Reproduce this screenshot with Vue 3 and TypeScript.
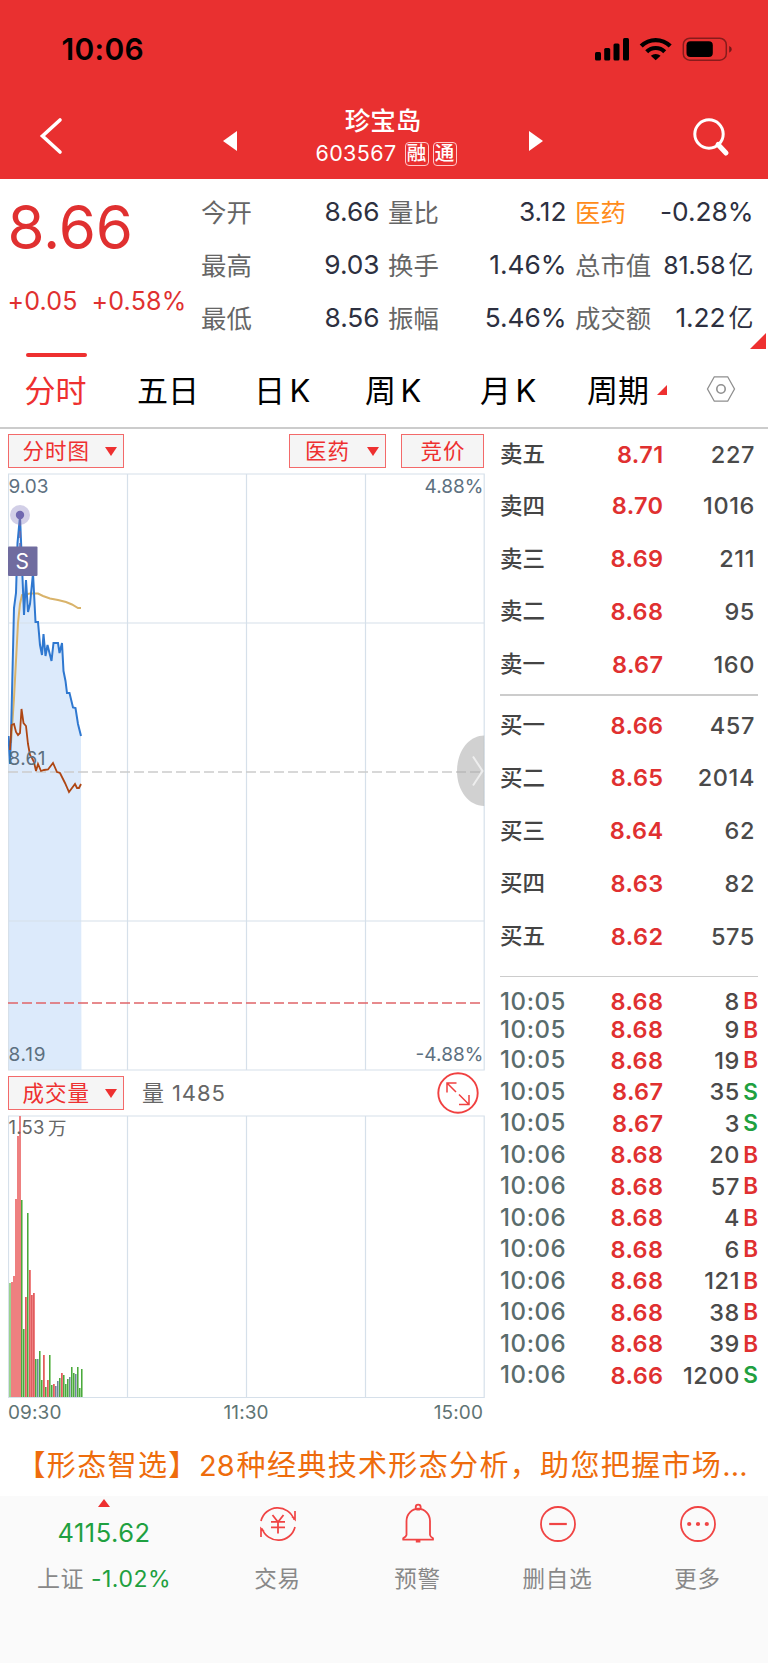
<script setup lang="ts">
interface Stat { label: string; value: string; unit?: string; tone?: string; small?: boolean }
interface Level { name: string; price: string; qty: number }
interface Tick { time: string; price: string; qty: number; side: 'B' | 'S' }
interface Bar { kind: 'r' | 'g' | 'b'; height: number }

const statColumns: Stat[][] = [
  [
    { label: '今开', value: '8.66' },
    { label: '最高', value: '9.03' },
    { label: '最低', value: '8.56' },
  ],
  [
    { label: '量比', value: '3.12' },
    { label: '换手', value: '1.46%' },
    { label: '振幅', value: '5.46%' },
  ],
  [
    { label: '医药', value: '-0.28%', tone: 'sector' },
    { label: '总市值', value: '81.58', unit: '亿', small: true },
    { label: '成交额', value: '1.22', unit: '亿' },
  ],
]

const asks: Level[] = [
  { name: '卖五', price: '8.71', qty: 227 },
  { name: '卖四', price: '8.70', qty: 1016 },
  { name: '卖三', price: '8.69', qty: 211 },
  { name: '卖二', price: '8.68', qty: 95 },
  { name: '卖一', price: '8.67', qty: 160 },
]
const bids: Level[] = [
  { name: '买一', price: '8.66', qty: 457 },
  { name: '买二', price: '8.65', qty: 2014 },
  { name: '买三', price: '8.64', qty: 62 },
  { name: '买四', price: '8.63', qty: 82 },
  { name: '买五', price: '8.62', qty: 575 },
]
const ticks: Tick[] = [
  { time: '10:05', price: '8.68', qty: 8, side: 'B' },
  { time: '10:05', price: '8.68', qty: 9, side: 'B' },
  { time: '10:05', price: '8.68', qty: 19, side: 'B' },
  { time: '10:05', price: '8.67', qty: 35, side: 'S' },
  { time: '10:05', price: '8.67', qty: 3, side: 'S' },
  { time: '10:06', price: '8.68', qty: 20, side: 'B' },
  { time: '10:06', price: '8.68', qty: 57, side: 'B' },
  { time: '10:06', price: '8.68', qty: 4, side: 'B' },
  { time: '10:06', price: '8.68', qty: 6, side: 'B' },
  { time: '10:06', price: '8.68', qty: 121, side: 'B' },
  { time: '10:06', price: '8.68', qty: 38, side: 'B' },
  { time: '10:06', price: '8.68', qty: 39, side: 'B' },
  { time: '10:06', price: '8.66', qty: 1200, side: 'S' },
]

const priceLine =
  '0.5,263 2,291 3,262 6,135 8,120 9.5,70 12,43 13.5,80 16,142 18,107 20,139 22,131 25,100 27.5,149 30,149 32,172 34,182 35.5,161 37.5,183 39.5,172 43.5,188 45.5,170 50,170 51.5,180 54,170 55.5,198 57.5,208 59,220 61.5,220 65,234.5 67.5,235 70,251 73,263'
const averageLine =
  '3,270 6,225 10,150 12,131 14,122 22,120.5 30,120.5 35,123 42,125.5 50,127 58,129 64,131.5 70,135 73,135'
const indexLine =
  '2,277 3.5,252 6,251 8,259 10,262 12,260 13.5,236 15.5,250 18,253 20,271 22,282 24,285 26,289 28,298 30,291 33,298 36,297 40,296.5 45,290 49,299 52,300 57,310 61,319 64,315 67,311 69,315 71,315 73,311'

const bars: Bar[] = (
  'g114 r115 r121 r198 r261 r281 g197 g68 r100 g184 r127 r102 r104 g38 b38 g46 g17 r42 g10 r17 g42 g12 r13 b11 b16 g19 r24 g22 g13 g18 b20 g30 g24 b23 g30 g9 g28'
).split(' ').map((s) => ({ kind: s[0] as Bar['kind'], height: Number(s.slice(1)) }))
</script>

<template>
  <div class="page">
    <header class="top">
      <div class="status">
        <span class="clock">10:06</span>
        <svg class="status-icons" width="140" height="26" viewBox="0 0 140 26">
          <rect x="0" y="16" width="6" height="8.5" rx="1.5" />
          <rect x="9.2" y="12" width="6" height="12.5" rx="1.5" />
          <rect x="18.5" y="7.5" width="6" height="17" rx="1.5" />
          <rect x="28" y="2" width="6" height="22.5" rx="1.5" />
          <path d="M44.7 8.6l3 3a18.4 18.4 0 0 1 26 0l3-3a22.7 22.7 0 0 0-32 0z" />
          <path d="M50.2 14.2l3 3a10.6 10.6 0 0 1 15 0l3-3a15 15 0 0 0-21 0z" />
          <path d="M55.8 19.8l4.9 4.5 4.9-4.5a7.4 7.4 0 0 0-9.8 0z" />
          <rect x="88.3" y="2.2" width="43" height="22" rx="6.5" fill="none" stroke="#000" stroke-opacity=".42" stroke-width="1.5" />
          <rect x="91.5" y="5.3" width="26.3" height="15.8" rx="4" />
          <path d="M134.2 10v6.7q2.6-.9 2.6-3.4t-2.6-3.3z" opacity=".5" />
        </svg>
      </div>
      <nav class="navbar">
        <svg class="back" width="24" height="38" viewBox="0 0 24 38"><path d="M21 3L3.5 19 21 35" fill="none" stroke="#fff" stroke-width="3.6" stroke-linecap="round" /></svg>
        <svg class="prev" width="14" height="20" viewBox="0 0 14 20"><path d="M0 10L14 0v20z" fill="#fff" /></svg>
        <div class="title">
          <h1>珍宝岛</h1>
          <div class="code"><span class="num">603567</span><i>融</i><i>通</i></div>
        </div>
        <svg class="next" width="14" height="20" viewBox="0 0 14 20"><path d="M14 10L0 0v20z" fill="#fff" /></svg>
        <svg class="search" width="38" height="40" viewBox="0 0 38 40" fill="none" stroke="#fff"><circle cx="17" cy="16" r="14.2" stroke-width="3" /><path d="M26 26.5l8 8.5" stroke-width="5" stroke-linecap="round" /></svg>
      </nav>
    </header>

    <section class="quote">
      <div class="headline">
        <div class="last">8.66</div>
        <div class="delta"><span>+0.05</span><span>+0.58%</span></div>
      </div>
      <div class="stats">
        <div v-for="(col, i) in statColumns" :key="i" class="stat-col">
          <div v-for="s in col" :key="s.label" class="stat" :class="[s.tone, { small: s.small }]">
            <span class="k">{{ s.label }}</span>
            <span class="v">{{ s.value }}<em v-if="s.unit">{{ s.unit }}</em></span>
          </div>
        </div>
      </div>
      <svg class="corner" width="16" height="16"><path d="M16 0v16H0z" fill="#ee3030" /></svg>
    </section>

    <nav class="tabs">
      <span class="tab t1 active">分时</span>
      <span class="tab t2">五日</span>
      <span class="tab t3">日<b>K</b></span>
      <span class="tab t4">周<b>K</b></span>
      <span class="tab t5">月<b>K</b></span>
      <span class="tab t6">周期</span>
      <svg class="more" width="10" height="10"><path d="M10 0v10H0z" fill="#ee3030" /></svg>
      <svg class="gear" width="30" height="28" viewBox="0 0 30 28" fill="none" stroke="#8f8f8f" stroke-width="1.3"><path d="M8.3 1.8h13.4L28.5 14l-6.8 12.2H8.3L1.5 14z" /><circle cx="15" cy="14" r="4.2" stroke-width="1.6" /></svg>
    </nav>

    <main class="body">
      <div class="charts">
        <div class="tools">
          <div class="select wide">分时图<svg width="12" height="9"><path d="M0 0h12L6 9z" fill="#ee3030" /></svg></div>
          <div class="select sector-btn">医药<svg width="12" height="9"><path d="M0 0h12L6 9z" fill="#ee3030" /></svg></div>
          <div class="select auction">竞价</div>
        </div>

        <svg class="chart" width="477" height="598" viewBox="0 0 477 598">
          <polygon :points="`0.5,597 ${priceLine} 73.5,597`" fill="#dceafb" />
          <g stroke="#d6e0ea" fill="none" stroke-width="1.2">
            <path d="M.5 1H476.2V597H.5z" />
            <path d="M119.5 1V597M238.5 1V597M357.5 1V597M0 150H476M0 448H476" />
          </g>
          <path d="M0 299H476" stroke="#ccc" stroke-width="1.6" stroke-dasharray="10 4" />
          <path d="M0 530H476" stroke="#e06468" stroke-width="1.6" stroke-dasharray="10 4" />
          <polyline :points="averageLine" fill="none" stroke="#d9b36a" stroke-width="2" />
          <polyline :points="priceLine" fill="none" stroke="#2f78d0" stroke-width="2" />
          <polyline :points="indexLine" fill="none" stroke="#ae4613" stroke-width="1.8" />
          <circle cx="12" cy="42" r="10" fill="#8880c0" opacity=".38" />
          <circle cx="12" cy="42" r="4.2" fill="#7068b0" />
          <path d="M12 46V74" stroke="#7068a8" stroke-width="1.5" stroke-dasharray="7 5" />
          <rect x="0" y="73.5" width="29.5" height="29.5" rx="1" fill="#706c9f" />
          <text x="14.3" y="95.5" text-anchor="middle" class="sell-mark">S</text>
          <g class="axis">
            <text x=".5" y="19.5" textLength="40">9.03</text>
            <text x=".5" y="291.5" textLength="37">8.61</text>
            <text x=".5" y="587.5" textLength="37">8.19</text>
            <text x="475.5" y="19.5" text-anchor="end" textLength="59">4.88%</text>
            <text x="475.5" y="587.5" text-anchor="end" textLength="68">-4.88%</text>
          </g>
          <path d="M476.2 262.5C461 262.5 449 278 449 298s12 35 27.2 35z" fill="#aaa" opacity=".54" />
          <path d="M465 283.5L474.5 298l-9.5 14.5" fill="none" stroke="#eee" stroke-width="2" />
        </svg>

        <div class="tools lower">
          <div class="select wide">成交量<svg width="12" height="9"><path d="M0 0h12L6 9z" fill="#ee3030" /></svg></div>
          <span class="vol">量 <span>1485</span></span>
          <svg class="expand" width="42" height="42" viewBox="0 0 42 42" fill="none" stroke="#f04040"><circle cx="21" cy="21" r="19.7" stroke-width="1.9" /><path d="M19 20L10 11M19.5 11H10v9.5M22 22.5l9.5 9.5M22 32.5h10v-9.5" stroke-width="1.5" /></svg>
        </div>

        <svg class="volume" width="477" height="284" viewBox="0 0 477 284">
          <path d="M.5 1H476.2V282.5H.5zM119.5 1V282M238.5 1V282M357.5 1V282" stroke="#d6e0ea" stroke-width="1.2" fill="none" />
          <g v-for="(b, i) in bars" :key="i" :class="'bar-' + b.kind">
            <rect class="soft" :x="1 + i * 2" :y="282 - b.height" width="2" :height="b.height" />
            <rect v-if="i > 5" :x="1 + i * 2" :y="282 - b.height" width="1" :height="b.height" />
          </g>
          <text x=".5" y="19" class="vol-max" textLength="36">1.53</text>
          <text x="40" y="19.5" class="vol-max">万</text>
        </svg>
        <div class="times"><span>09:30</span><span>11:30</span><span>15:00</span></div>
      </div>

      <aside class="book">
        <div class="levels asks">
          <div v-for="l in asks" :key="l.name" class="level"><span class="n">{{ l.name }}</span><span class="p">{{ l.price }}</span><span class="q">{{ l.qty }}</span></div>
        </div>
        <div class="levels bids">
          <div v-for="l in bids" :key="l.name" class="level"><span class="n">{{ l.name }}</span><span class="p">{{ l.price }}</span><span class="q">{{ l.qty }}</span></div>
        </div>
        <div class="ticks">
          <div v-for="(t, i) in ticks" :key="i" class="tick"><span class="t">{{ t.time }}</span><span class="p">{{ t.price }}</span><span class="q">{{ t.qty }}</span><span class="side" :class="t.side">{{ t.side }}</span></div>
        </div>
      </aside>
    </main>

    <div class="promo"><span>【形态智选】</span><span class="n28">28</span><span>种经典技术形态分析，助您把握市场</span><span class="dots">...</span></div>

    <footer class="dock">
      <div class="index">
        <svg width="12" height="8"><path d="M6 0l6 8H0z" fill="#ee3030" /></svg>
        <div class="points">4115.62</div>
        <div class="chg">上证 <span>-1.02%</span></div>
      </div>
      <div class="action">
        <svg width="42" height="42" viewBox="0 0 42 42" fill="none" stroke="#f04444" stroke-width="1.7"><path d="M4 18A17.2 17.2 0 0 1 37 16.5M38 8v8.5l-3-3M38 24A17.2 17.2 0 0 1 5 25.5M4 34v-8.5l3 3" /><path d="M15.5 12l5.5 7 5.5-7M21 19v11.5M14 18.8h14M14 24.3h14" stroke-width="1.8" /></svg>
        <span>交易</span>
      </div>
      <div class="action">
        <svg width="42" height="42" viewBox="0 0 42 42" fill="none" stroke="#f04444" stroke-width="1.8"><path d="M9.5 32V18a11.5 12 0 0 1 23.5 0V32q.2 1.5 3 3.2v1.5H6.2v-1.5q3-1.7 3.3-3.2z" stroke-linejoin="round" /><circle cx="21.2" cy="4.2" r="2.5" /><path d="M18.8 38.2h4.6" stroke-width="2.6" /></svg>
        <span>预警</span>
      </div>
      <div class="action">
        <svg width="42" height="42" viewBox="0 0 42 42" fill="none" stroke="#f04444" stroke-width="1.8"><circle cx="21" cy="21" r="17" /><path d="M12.2 21h17.6" stroke-width="2.2" /></svg>
        <span>删自选</span>
      </div>
      <div class="action">
        <svg width="42" height="42" viewBox="0 0 42 42" fill="none" stroke="#f04444" stroke-width="1.8"><circle cx="21" cy="21" r="17" /><g fill="#f04444" stroke="none"><circle cx="12.2" cy="21" r="2.1" /><circle cx="21" cy="21" r="2.1" /><circle cx="29.8" cy="21" r="2.1" /></g></svg>
        <span>更多</span>
      </div>
    </footer>
  </div>
</template>

<style>
body { background: #fafafa; }
</style>

<style scoped>
* { box-sizing: border-box; }
svg { display: block; flex: none; }
.page {
  width: 768px; height: 1663px; overflow: hidden; background: #fff;
  display: flex; flex-direction: column;
  font-family: Inter, "Noto Sans CJK SC", sans-serif; line-height: 1; white-space: nowrap;
}
.top { height: 179px; flex: none; background: #e93030; }
.status { height: 98px; padding: 0 33px 0 61.5px; display: flex; align-items: center; justify-content: space-between; }
.clock { font-size: 30px; font-weight: 600; letter-spacing: .3px; color: #000; }
.navbar { height: 81px; display: flex; align-items: center; color: #fff; }
.back { margin: -5px 0 0 39px; }
.prev { margin: 5px 0 0 160px; }
.next { margin-top: 5px; }
.title { width: 292px; display: flex; flex-direction: column; align-items: center; gap: 8px; margin-top: -5px; }
h1 { margin: 0; font-size: 25.5px; line-height: 27px; font-weight: 500; }
.code { display: flex; align-items: center; height: 24px; font-size: 21.5px; letter-spacing: .4px; padding-left: 10px; }
.code .num { margin-right: 8px; }
.code i { width: 24px; height: 24px; margin-right: 4px; border: 1.5px solid #ffc9c9; border-radius: 4px; font-style: normal; font-size: 19.5px; font-weight: 500; display: flex; align-items: center; justify-content: center; letter-spacing: 0; }
.search { margin: -2px 0 0 149px; }

.quote { height: 172px; flex: none; display: flex; position: relative; }
.headline { width: 202px; color: #e03030; padding-left: 7.5px; }
.last { font-size: 60px; line-height: 60px; margin-top: 18px; letter-spacing: -.2px; }
.delta { display: flex; font-size: 25px; line-height: 30px; margin-top: 29px; letter-spacing: .2px; }
.delta span:first-child { width: 84px; }
.stats { display: flex; gap: 8.5px; padding-top: 7px; margin-left: -1px; }
.stat-col { width: 178.5px; }
.stat { height: 53px; display: flex; align-items: center; justify-content: space-between; }
.stat .k { font-size: 25.4px; color: #666; }
.stat .v { font-size: 26.3px; color: #2d3040; letter-spacing: -.05px; display: flex; align-items: center; }
.stat em { font-style: normal; font-size: 25px; margin-left: 3px; }
.stat.small .v { font-size: 24.8px; }
.sector .k { color: #ff8c1a; }
.corner { position: absolute; right: 2px; bottom: 2px; }

.tabs { height: 78px; flex: none; display: flex; align-items: center; font-size: 31px; color: #000; border-bottom: 2px solid #ccc; padding-top: 2px; }
.tab { position: relative; display: flex; align-items: center; }
.tab b { font-weight: 400; font-size: 31px; margin-left: 4.5px; }
.t1 { margin-left: 24.5px; width: 112.5px; }
.t2 { width: 117px; }
.t3 { width: 111px; }
.t4 { width: 115px; }
.t5 { width: 107px; }
.t6 { width: 70px; }
.active { color: #ee3030; }
.active::before { content: ""; position: absolute; left: 1.5px; top: -22px; width: 61px; height: 4.5px; border-radius: 2px; background: #ee3030; }
.gear { margin: -2px 0 0 39px; }

.body { display: flex; height: 1002px; flex: none; }
.charts { width: 500px; padding-left: 7.5px; padding-top: 5px; }
.tools { height: 34px; width: 476.5px; display: flex; align-items: center; }
.select { height: 34px; border: 1px solid #f36a6a; background: #f5f5f5; color: #ee3030; font-size: 21.5px; display: flex; align-items: center; padding: 2px 6px 0 14px; letter-spacing: 1px; justify-content: space-between; }
.select svg { margin-top: -2px; }
.wide { width: 116.5px; }
.sector-btn { width: 97px; margin-left: 165px; padding-left: 15px; }
.auction { width: 83px; margin-left: auto; padding: 2px 0 0 1px; justify-content: center; }
.chart { margin-top: 5px; }
.lower { margin-top: 5px; }
.vol { margin-left: 18px; font-size: 22px; color: #666; letter-spacing: .9px; }
.expand { margin: 0 5.5px 0 auto; }
.volume { margin-top: 5px; }
.axis text { font-size: 19px; fill: #5d7080; }
.sell-mark { font-size: 21px; fill: #fff; }
.vol-max { font-size: 18.5px; fill: #666; }
.bar-r { fill: #df5d60; }
.bar-r .soft { fill: #ee8080; }
.bar-g { fill: #4aa83e; }
.bar-g .soft { fill: #9ad28f; }
.bar-b { fill: #708599; }
.bar-b .soft { fill: #b0bdcb; }
.times { display: flex; justify-content: space-between; width: 475.5px; margin-top: 2px; padding-left: .5px; font-size: 19px; line-height: 24px; color: #5f7474; letter-spacing: .1px; }
.times span:nth-child(2) { margin-left: -3px; }

.book { width: 258px; }
.levels { border-bottom: 2px solid #ccc; }
.asks { height: 267px; }
.bids { height: 281px; padding-top: 3px; border-bottom-width: 1.5px; }
.level { height: 52.75px; display: flex; align-items: center; padding-right: 3px; }
.asks .level:first-child { height: 50.8px; }
.n { width: 80px; font-size: 22.5px; color: #444; font-weight: 500; }
.p { width: 83.5px; text-align: right; font-size: 23.5px; color: #e03030; font-weight: 600; letter-spacing: .4px; }
.q { flex: 1; text-align: right; font-size: 23.5px; color: #4a4a4a; font-weight: 500; letter-spacing: .6px; }
.ticks { padding-top: 10.5px; }
.tick { height: 31.5px; display: flex; align-items: center; }
.tick:first-child { height: 28px; }
.tick:nth-child(2) { height: 29px; }
.t { width: 80px; font-size: 24px; color: #5a6c6c; font-weight: 500; letter-spacing: .6px; }
.side { width: 18px; text-align: right; font-size: 22.5px; font-weight: 600; }
.B { color: #e03030; }
.S { color: #1fa040; }

.promo { height: 65px; flex: none; display: flex; align-items: center; padding: 4px 0 0 16.5px; font-size: 29px; letter-spacing: 1.35px; color: #ee6c0c; }
.n28 { width: 38px; letter-spacing: 0; padding-left: .5px; }
.dots { letter-spacing: .2px; }

.dock { flex: 1; background: #fafafa; display: flex; color: #888; font-size: 22.5px; }
.index { width: 208px; display: flex; flex-direction: column; align-items: center; padding-top: 3px; }
.points { font-size: 25.5px; color: #1fa040; margin-top: 13px; height: 26px; letter-spacing: .5px; }
.chg { margin-top: 21.5px; font-size: 23px; letter-spacing: .5px; }
.chg span { color: #1fa040; }
.action { width: 140px; display: flex; flex-direction: column; align-items: center; padding-top: 7px; }
.action span { margin: 23px 1px 0 0; letter-spacing: .8px; }
</style>
